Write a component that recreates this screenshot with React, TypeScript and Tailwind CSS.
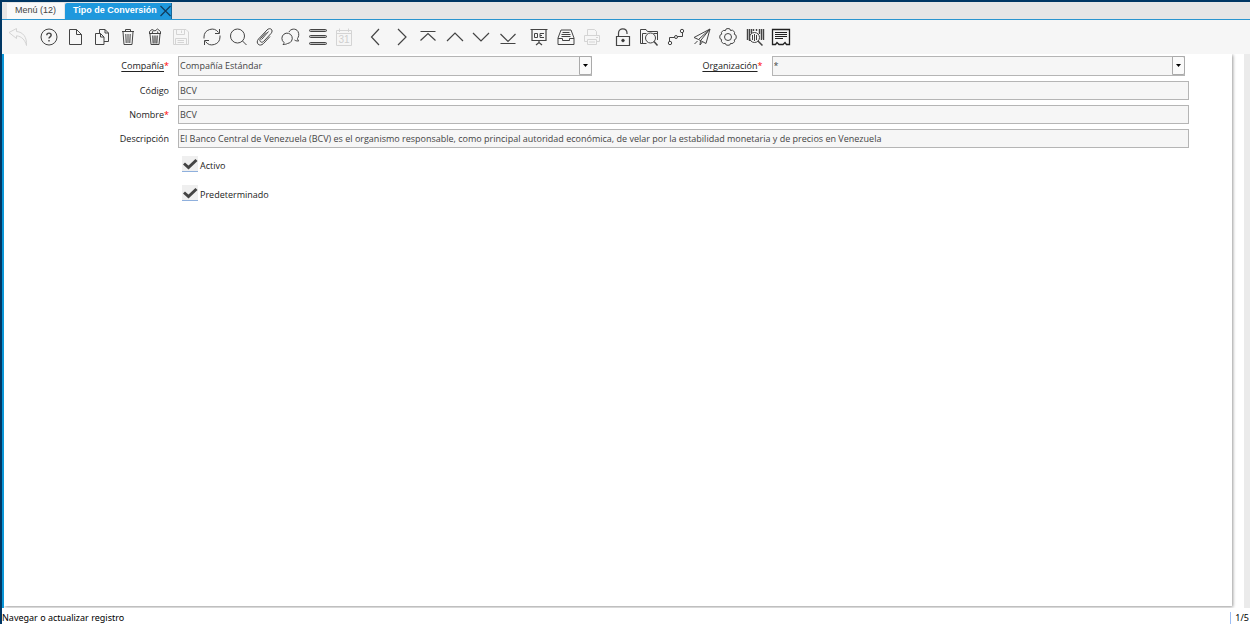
import { useState } from 'react'
import type { ReactNode } from 'react'

type Tool = { name: string; icon: ReactNode; disabled?: boolean }

const toolGroups: { width: string; tools: Tool[] }[] = [
  {
    width: 'w-[22px]',
    tools: [
      {
        name: 'Deshacer',
        disabled: true,
        icon: <path d="M2 6.5 9.5 2.5V5.5C16 6 20 11 19.5 19.5 18 14 15 10.5 9.5 9.8V12.5Z" />,
      },
    ],
  },
  {
    width: 'w-[154px]',
    tools: [
      {
        name: 'Ayuda',
        icon: (
          <>
            <circle cx="11" cy="11" r="8" />
            <path d="M8.8 9.2C8.8 6.4 13.2 6.4 13.2 9.1 13.2 10.9 11 10.8 11 12.6M11 14v1.4" strokeWidth="1.4" />
          </>
        ),
      },
      { name: 'Nuevo', icon: <path d="M5.5 3.5h7L17.5 8.5V18.5H5.5ZM12.5 3.5v5H17.5" /> },
      {
        name: 'Copiar',
        icon: <path d="M4.5 7.5h5l3.5 3.5V18.5H4.5ZM9.5 7.5V11H13M8.5 7V3.5h5.5l3.5 3.5V15.5H13M14 3.5v3.5h3.5" />,
      },
      {
        name: 'Borrar',
        icon: (
          <>
            <path d="M5 5.5H17M8.5 5.5V3.5h5v2M6 6l1 12.5h8L16 6" />
            <path d="M8.8 8l.4 9M11 8v9M13.2 8l-.4 9" />
          </>
        ),
      },
      {
        name: 'Borrar selección',
        icon: (
          <>
            <path d="M5 7.5H17M6 8l1 10.5h8L16 8M5.5 7.5V5.5L8 3.5 11 5 13.5 3 16.5 5.5V7.5M8 7.5 9 5M13.5 5.5l.5 2" />
            <path d="M8.8 9.5l.4 8M11 9.5v8M13.2 9.5l-.4 8" strokeWidth="1.2" />
          </>
        ),
      },
      {
        name: 'Guardar',
        disabled: true,
        icon: (
          <path d="M3.5 3.5H16L18.5 6V18.5H3.5ZM6.5 3.5V8.5h8V3.5M11.5 4.5V7M5.5 18.5V12.5H16.5V18.5M7.5 14.5h6.5M7.5 16.5h6.5" />
        ),
      },
    ],
  },
  {
    width: 'w-[154px]',
    tools: [
      {
        name: 'Refrescar',
        icon: <path d="M3 12.5V11A8 8 0 0 1 17.5 6.5M18.5 3v4.5H14M19 9.5V11A8 8 0 0 1 4.5 15.5M3.5 19V14.5H8" />,
      },
      {
        name: 'Buscar',
        icon: (
          <>
            <circle cx="10.5" cy="10" r="7" />
            <path d="M15.5 15l4 4" />
          </>
        ),
      },
      {
        name: 'Adjuntos',
        icon: (
          <path d="M12 6.5 6.5 12.5C4.5 15 7.5 17.5 9.5 15.5L17 7.5C20 4 16 .8 13 4L4.5 13C1 17 5.5 21.5 9.5 17.5L16 10.5M14.5 5.5 7.5 13.5" />
        ),
      },
      {
        name: 'Conversación',
        icon: (
          <>
            <path d="M4 16.5A5.2 5.2 0 1 1 7.5 17.5C6 18.3 5 18.5 3 18.5 3.8 17.8 4 17.5 4 16.5Z" />
            <path d="M9 6C10.5 2.5 16 2 18 5.5 19.5 8.5 18.5 11 17.5 12.5 17.5 13.5 18 14.5 18.7 15 16.5 15 15.5 14.8 14.5 14" />
          </>
        ),
      },
      {
        name: 'Cuadrícula',
        icon: (
          <g fill="#bbb">
            <rect x="2.5" y="3.5" width="17" height="2" rx="1" />
            <rect x="2.5" y="9.5" width="17" height="2" rx="1" />
            <rect x="2.5" y="16.5" width="17" height="2" rx="1" />
          </g>
        ),
      },
      {
        name: 'Historial',
        disabled: true,
        icon: (
          <>
            <path d="M3.5 4.5H18.5V19.5H3.5ZM3.5 7.5H18.5M6.5 2.5v3.5M15.5 2.5v3.5" />
            <text x="11" y="17" textAnchor="middle" className="fill-[#cfcfcf] stroke-none font-['Liberation_Sans'] text-[10px]">
              31
            </text>
          </>
        ),
      },
    ],
  },
  {
    width: 'w-[155px]',
    tools: [
      { name: 'Anterior', icon: <path d="M15 3 7.5 11 15 19" strokeWidth="1.2" /> },
      { name: 'Siguiente', icon: <path d="M7 3 15 11 7 19" strokeWidth="1.2" /> },
      { name: 'Primer registro', icon: <path d="M3.5 5.5H18.5M3.5 14.5 11 7.5 18.5 14.5" strokeWidth="1.2" /> },
      { name: 'Registro anterior', icon: <path d="M3 15 11 7 19 15" strokeWidth="1.2" /> },
      { name: 'Registro siguiente', icon: <path d="M3 7 11 15 19 7" strokeWidth="1.2" /> },
      { name: 'Último registro', icon: <path d="M3.5 17.5H18.5M3.5 8 11 15.5 18.5 8" strokeWidth="1.2" /> },
    ],
  },
  {
    width: 'w-[75px]',
    tools: [
      {
        name: 'Informe',
        icon: (
          <>
            <path d="M2.5 3.5h17M4 4V14.5H18V4M11 14.5V17M8 19 11 16.5 14 19" strokeWidth="1.2" />
            <path d="M6.5 7.5h3v4h-3ZM12 7.5h4M12 9.5h2M12 11.5h4M12 7.5v4" />
          </>
        ),
      },
      {
        name: 'Archivo',
        icon: (
          <path d="M3 12 6 4H16L19 12V18.5H3ZM3 12.5H7.5V14.5H14.5V12.5H19M7.5 6.5h7M6.5 8.5h9M6.5 10.5h9" />
        ),
      },
      {
        name: 'Imprimir',
        disabled: true,
        icon: <path d="M6.5 9.5V3.5h7L15.5 5.5V9.5M6 15.5H3.5V9.5H18.5V15.5H16M6.5 13.5H15.5V18.5H6.5ZM8 16h6M15 11.5h2" />,
      },
    ],
  },
  {
    width: 'w-[180px]',
    tools: [
      {
        name: 'Bloquear',
        icon: (
          <>
            <path d="M4.5 10.5H17.5V19.5H4.5ZM6.5 10V7C6.5 1.5 15 1.5 15 7V8" strokeWidth="1.2" />
            <circle cx="11" cy="14.5" r="1.3" fill="#333" />
          </>
        ),
      },
      {
        name: 'Zoom',
        icon: (
          <>
            <path d="M8.5 17.5H2.5V3.5H8L9.5 5.5H19.5V14M4.5 7.5H8.5M15.5 7.5H19.5M4.5 7.5V17.5" />
            <circle cx="12.5" cy="12" r="5" />
            <path d="M16 15.5 19.5 19.5" strokeWidth="1.5" />
          </>
        ),
      },
      {
        name: 'Flujo de trabajo',
        icon: (
          <>
            <circle cx="5" cy="17" r="1.7" />
            <circle cx="11" cy="11" r="1.5" />
            <circle cx="17" cy="5" r="1.7" />
            <path d="M4.5 15.3V11.5H9.5M12.5 10.5H17.5V6.7" />
          </>
        ),
      },
      {
        name: 'Solicitudes',
        icon: (
          <path d="M19 3 3 11.5 7.5 13.5 15 17.5 19 3 7.5 13.5M19 3 9.5 14.7 9 19 11.5 15.7M6.5 15 3.5 18" />
        ),
      },
      {
        name: 'Proceso',
        icon: (
          <>
            <path d="M9 3Q11 2 13 3L13.5 4.5 15.5 4.2Q17 5 17.6 6.5L17.3 8.3 19 9.2Q19.5 11 19 12.8L17.3 13.8 17.5 15.7Q16.5 17.2 15 17.6L13.5 17.4 12.8 19Q11 19.5 9.2 19L8.3 17.4 6.5 17.6Q5 16.8 4.3 15.3L4.6 13.5 3 12.7Q2.5 11 3 9.2L4.7 8.2 4.4 6.4Q5.2 5 6.7 4.4L8.5 4.6Z" />
            <circle cx="11" cy="11" r="3.5" />
          </>
        ),
      },
      {
        name: 'Información del producto',
        icon: (
          <>
            <path d="M3.5 3V14M5.5 3V15M17.5 3V14M19.5 3V14" strokeWidth="1.4" />
            <path d="M7.5 3V7M9.5 3V5M12.5 3V5M15.5 3V8" strokeWidth="1.4" />
            <circle cx="10.5" cy="11.5" r="5" />
            <path d="M8.5 9v5M10.5 8v7M12.5 9v5" />
            <path d="M14 15 18.5 19.5" strokeWidth="1.5" />
          </>
        ),
      },
      {
        name: 'Recibo',
        icon: (
          <g stroke="#222">
            <path d="M2.5 3.5H19.5V18.5H16.5L15 16.5 13 18.5H9L7 16.5 5.5 18.5H2.5Z" strokeWidth="1.3" />
            <path d="M5 6.5H17M5 8.5H17M5 10.5H17M5 12.5H13" />
          </g>
        ),
      },
    ],
  },
]

export default function App() {
  return (
    <div className="flex min-h-screen flex-col border-t-2 border-l-2 border-[#003764] bg-white font-['Open_Sans','Noto_Sans',sans-serif] text-[9px] text-[#333]">
      <TabBar />
      <Toolbar />
      <main className="flex flex-1 overflow-hidden border-l-2 border-[#0a96d8]">
        <section className="mr-3 mb-[2px] flex-1 bg-white shadow-[1px_1px_3px_#999]">
          <RecordForm />
        </section>
        <div className="w-[6px] bg-[#ebebeb]" />
      </main>
      <footer className="flex h-4 items-end justify-between font-['Noto_Sans',sans-serif] leading-3 text-black">
        <p>Navegar o actualizar registro</p>
        <p className="border-l border-[#9bbdf5] pr-px pl-1">1/5</p>
      </footer>
    </div>
  )
}

const TabBar = () => {
  return (
    <nav className="flex h-[18px] items-end border-b border-[#2a95cf] bg-[#e6e6e6] pl-[5px] font-['Liberation_Sans',Arial,sans-serif]">
      <button className="mr-px h-4 w-[57px] bg-[#f9f9f9] text-[#444]">Menú (12)</button>
      <div className="flex h-4 w-[107px] items-center justify-between rounded-tl-xs border-r border-[#17689a] bg-[#1e98dd] pl-2 font-bold text-white">
        <button>Tipo de Conversión</button>
        <button aria-label="Cerrar">
          <svg width="11" height="12" viewBox="0 0 11 12" stroke="#123c5c" strokeWidth="1.2">
            <path d="M.5 1 10.5 11M10.5 1 .5 11" />
          </svg>
        </button>
      </div>
    </nav>
  )
}

const Toolbar = () => {
  return (
    <div role="toolbar" className="flex h-[34px] items-center gap-[9px] bg-[#f6f6f6] pl-[5px]">
      {toolGroups.map((group, idx) => (
        <div key={idx} className={`flex justify-between ${group.width}`}>
          {group.tools.map((tool) => (
            <button key={tool.name} title={tool.name} aria-label={tool.name} disabled={tool.disabled}>
              <svg width="22" height="22" viewBox="0 0 22 22" fill="none" stroke={tool.disabled ? '#d4d4d4' : '#444'}>
                {tool.icon}
              </svg>
            </button>
          ))}
        </div>
      ))}
    </div>
  )
}

const RecordForm = () => {
  return (
    <form className="grid grid-cols-[165px_1fr_158px_1fr] items-center gap-x-[9px] gap-y-[5px] pt-[2px] pr-[43px]">
      <FieldLabel id="company" text="Compañía" required linked />
      <Combo id="company" value="Compañía Estándar" />
      <FieldLabel id="organization" text="Organización" required linked />
      <Combo id="organization" value="*" />

      <FieldLabel id="code" text="Código" />
      <TextField id="code" value="BCV" />

      <FieldLabel id="name" text="Nombre" required />
      <TextField id="name" value="BCV" />

      <FieldLabel id="description" text="Descripción" />
      <TextField
        id="description"
        value="El Banco Central de Venezuela (BCV) es el organismo responsable, como principal autoridad económica, de velar por la estabilidad monetaria y de precios en Venezuela"
      />

      <div className="col-span-3 col-start-2 flex flex-col gap-[13px] pt-[3px] pl-1">
        <Check label="Activo" />
        <Check label="Predeterminado" />
      </div>
    </form>
  )
}

const FieldLabel = ({ id, text, required, linked }: { id: string; text: string; required?: boolean; linked?: boolean }) => {
  return (
    <label htmlFor={id} className="text-right leading-4 text-[#222]">
      <span className={linked ? 'underline underline-offset-2' : ''}>{text}</span>
      {required && <span className="text-[#f00]">*</span>}
    </label>
  )
}

const TextField = ({ id, value }: { id: string; value: string }) => {
  return (
    <input
      id={id}
      defaultValue={value}
      className="col-span-3 h-[19px] w-full border border-[#b5b5b5] bg-[#f6f6f6] px-px text-[#444]"
    />
  )
}

const Combo = ({ id, value }: { id: string; value: string }) => {
  return (
    <div className="relative mr-1 h-5">
      <select id={id} className="h-5 w-full appearance-none border border-[#b5b5b5] bg-[#f6f6f6] px-px text-[#444]">
        <option>{value}</option>
      </select>
      <span className="pointer-events-none absolute top-0 right-0 flex h-[19px] w-[13px] items-center justify-center rounded-r-xs border border-[#aaa] bg-[#fafafa]">
        <svg width="5" height="3" viewBox="0 0 5 3">
          <path d="M0 0H5L2.5 3Z" />
        </svg>
      </span>
    </div>
  )
}

const Check = ({ label }: { label: string }) => {
  const [checked, setChecked] = useState(true)

  return (
    <label className="flex h-4 items-center gap-[2px] text-[#222]">
      <span className="relative h-4 w-4">
        <input
          type="checkbox"
          checked={checked}
          onChange={() => setChecked(!checked)}
          className="block h-4 w-4 appearance-none border-b border-[#8fb0dd] bg-[#efefef]"
        />
        {checked && (
          <svg className="pointer-events-none absolute top-0 left-0" width="16" height="16" viewBox="0 0 16 16">
            <path d="M2 7.5 6.5 11.5 14.5 4" fill="none" stroke="#444" strokeWidth="3" />
          </svg>
        )}
      </span>
      <span className="pt-[3px]">{label}</span>
    </label>
  )
}
